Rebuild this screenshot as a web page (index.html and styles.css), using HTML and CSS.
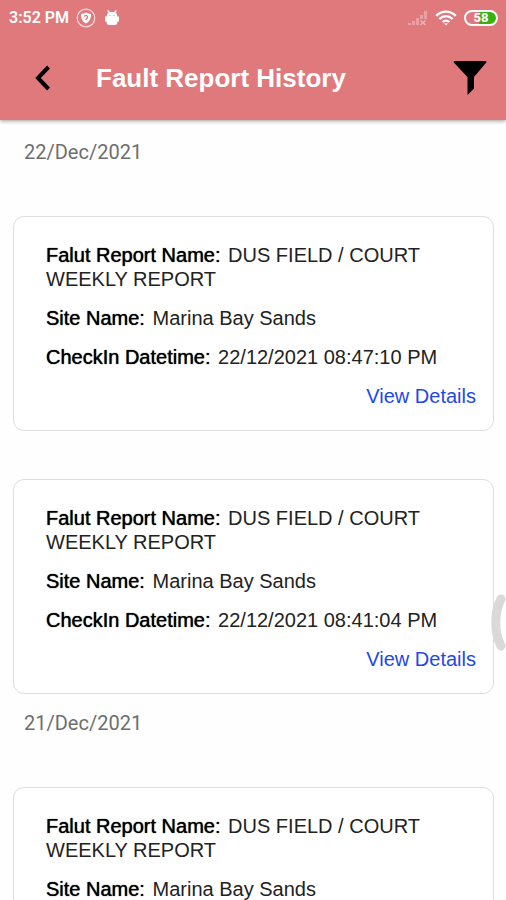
FILE: index.html
```html
<!DOCTYPE html>
<html lang="en">
<head>
<meta charset="utf-8">
<meta name="viewport" content="width=device-width, initial-scale=1">
<title>Fault Report History</title>
<link rel="stylesheet" href="styles.css">
</head>
<body>
<header class="top">
  <div class="status">
    <span class="time">3:52 PM</span>
    <svg class="shield" width="20" height="20" viewBox="0 0 20 20" fill="none"><circle cx="10" cy="10" r="8.8" stroke="#fbd9da" stroke-width="1.2"/><path d="M10 4.600c1.600 1 3.200 1.200 5 1.300.2 4-1.200 7.600-5 9.600-3.800-2-5.200-5.600-5-9.600 1.800-.1 3.400-.3 5-1.300z" fill="#fff"/><path d="M8.300 8.300c1.200-1.400 3.600-.7 3.300 1-.2 1-1.600 1.200-1.600 2.600" stroke="#df797c" stroke-width="1.300"/></svg>
    <svg class="bug" width="14" height="18" viewBox="0 0 14 18" fill="#fff"><path d="M3 1l2 2h4l2-2 .8.700-1.200 2C12 4.500 12.200 6 12.200 7.500H14v5h-1.500c0 2-1 3.500-2.500 3.500H4c-1.500 0-2.500-1.500-2.500-3.500H0v-5h1.800c0-1.500.2-3 1.600-3.800l-1.200-2z"/><circle cx="5" cy="6.500" r=".6" fill="#df797c"/><circle cx="9" cy="6.500" r=".6" fill="#df797c"/></svg>
    <span class="space"></span>
    <svg class="signal" width="20" height="16" viewBox="0 0 20 16" fill="#eaa0a2"><path d="M0 13h3v2H0zM4 11h3v4H4zM8 8h3v7H8zM12 5h3v4h-3zM16 1h3v8h-3z"/><path d="M12.500 10.500l5 4.500m0-4.500l-5 4.500" stroke="#efb4b5" stroke-width="1.500"/></svg>
    <svg class="wifi" width="22" height="16" viewBox="0 0 22 16" fill="none" stroke="#fff" stroke-width="2.400"><path d="M1.200 5.800c5.600-5.600 14-5.600 19.600 0M4.400 9c3.800-3.800 9.400-3.800 13.200 0M7.600 12c2-1.900 4.800-1.900 6.800 0"/><path d="M9 13.200h4L11 15.600z" fill="#fff" stroke="none"/></svg>
    <span class="battery">58</span>
  </div>
  <div class="bar">
    <button class="back" type="button" aria-label="Back"><svg width="16" height="26" viewBox="0 0 16 26" fill="none" stroke="#000" stroke-width="4"><path d="M14.500 2L4 13l10.500 11"/></svg></button>
    <h1>Fault Report History</h1>
    <button class="filter" type="button" aria-label="Filter"><svg width="34" height="34" viewBox="0 0 34 34"><path d="M1.500 0h31q1.500 0 .8 1.500L21 16v11.500l-6.500 6.500V16L.7 1.500Q0 0 1.500 0z"/></svg></button>
  </div>
</header>
<main>
  <section>
    <h2>22/Dec/2021</h2>
    <article class="card">
      <p><b>Falut Report Name:</b> DUS FIELD / COURT WEEKLY REPORT</p>
      <p><b>Site Name:</b> Marina Bay Sands</p>
      <p><b>CheckIn Datetime:</b> 22/12/2021 08:47:10 PM</p>
      <a href="#">View Details</a>
    </article>
    <article class="card">
      <p><b>Falut Report Name:</b> DUS FIELD / COURT WEEKLY REPORT</p>
      <p><b>Site Name:</b> Marina Bay Sands</p>
      <p><b>CheckIn Datetime:</b> 22/12/2021 08:41:04 PM</p>
      <a href="#">View Details</a>
    </article>
  </section>
  <section>
    <h2>21/Dec/2021</h2>
    <article class="card">
      <p><b>Falut Report Name:</b> DUS FIELD / COURT WEEKLY REPORT</p>
      <p><b>Site Name:</b> Marina Bay Sands</p>
    </article>
  </section>
</main>
<svg class="handle" width="15" height="58" viewBox="0 0 15 58" fill="none" stroke="#d9d9d9" stroke-width="9" stroke-linecap="round"><path d="M10 5C3 18 3 39 10 52"/></svg>
</body>
</html>
```
FILE: styles.css
```css
* { box-sizing: border-box; }
html { height: 100%; overflow: hidden; }
body {
  margin: 0;
  height: 100%;
  overflow: hidden;
  background: #fefefe;
  color: #222;
  font-family: "Liberation Sans", Arial, sans-serif;
  font-size: 20px;
  line-height: 24px;
}
h1, h2, p { margin: 0; }
button { padding: 0; border: 0; background: none; display: flex; }
.top {
  background: #df797c;
  box-shadow: 0 1px 4px rgba(0, 0, 0, 0.4);
}
.status {
  display: flex;
  align-items: center;
  height: 36px;
  padding: 0 8px 0 9px;
  color: #fff;
  font-family: Roboto, sans-serif;
}
.time { font-size: 16px; font-weight: 600; }
.shield { margin-left: 7px; }
.bug { margin-left: 9px; }
.space { flex: 1; }
.wifi { margin: 0 7px; }
.battery {
  width: 34px;
  height: 16px;
  border: 2px solid #fff;
  border-radius: 8px;
  background: linear-gradient(90deg, #df797c 42%, #36b312 42%);
  font-size: 13px;
  font-weight: 700;
  line-height: 12px;
  text-align: center;
}
.bar {
  display: flex;
  align-items: center;
  height: 84px;
  padding: 0 19px 0 34px;
}
.bar h1 {
  flex: 1;
  margin-left: 46px;
  color: #fff;
  font-size: 26px;
  line-height: 32px;
}
h2 {
  padding: 20px 24px 0;
  height: 96px;
  color: #6e6e6e;
  font-family: Roboto, sans-serif;
  font-size: 20px;
  font-weight: 400;
}
section + section h2 { padding-top: 17px; height: 93px; }
.card {
  display: flex;
  flex-direction: column;
  gap: 15px;
  margin: 0 12px 0 13px;
  padding: 26px 17px 22px 32px;
  border: 1px solid #dedede;
  border-radius: 11px;
  background: #fff;
}
.card + .card { margin-top: 48px; }
.card b {
  margin-right: 2px;
  color: #000;
  font-weight: 400;
  text-shadow: 0 0 1px #000;
}
.card a { align-self: flex-end; color: #1f48e8; text-decoration: none; }
.handle { position: absolute; right: 0; top: 594px; }
```
